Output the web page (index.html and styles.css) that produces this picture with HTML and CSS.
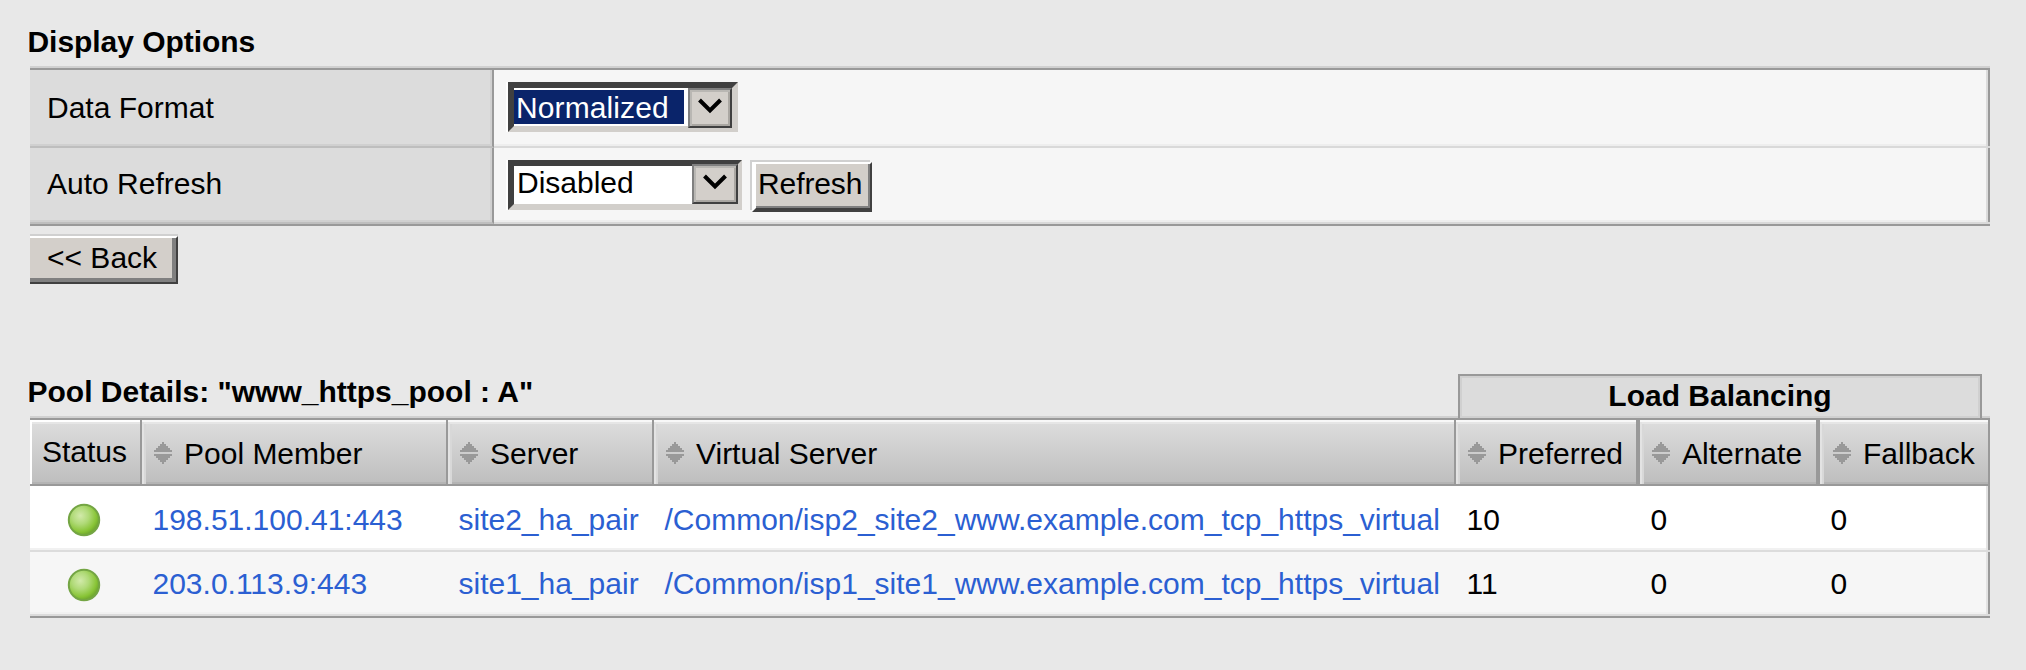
FILE: index.html
```html
<!DOCTYPE html>
<html lang="en">
<head>
<meta charset="utf-8">
<title>Pool Details</title>
<link rel="stylesheet" href="styles.css">
</head>
<body>
<svg class="defs" width="0" height="0" aria-hidden="true">
  <defs>
    <radialGradient id="led" cx="0.38" cy="0.36" r="0.62">
      <stop offset="0" stop-color="#d2eaaa"/>
      <stop offset="0.45" stop-color="#b0da78"/>
      <stop offset="0.85" stop-color="#88c436"/>
      <stop offset="1" stop-color="#74ac30"/>
    </radialGradient>
    <symbol id="sort" viewBox="0 0 18 22">
      <path d="M8 0h2v2h2v2h2v2h2v2h2v2H0V8h2V6h2V4h2V2h2z" fill="#999"/>
      <path d="M0 12h18v2h-2v2h-2v2h-2v2h-2v2H8v-2H6v-2H4v-2H2v-2H0z" fill="#999"/>
    </symbol>
    <symbol id="green" viewBox="0 0 34 34">
      <circle cx="17" cy="17" r="15.2" fill="url(#led)" stroke="#74a544" stroke-width="2"/>
    </symbol>
    <symbol id="arrow" viewBox="0 0 24 16">
      <path d="M1.5 2l10.5 10.5L22.500 2" fill="none" stroke="#000" stroke-width="4"/>
    </symbol>
  </defs>
</svg>

<main class="page">
  <h2 class="title">Display Options</h2>
  <section class="options">
    <div class="option">
      <div class="label">Data Format</div>
      <div class="control">
        <div class="select focused">
          <span class="value">Normalized</span>
          <span class="drop"><svg width="24" height="16"><use href="#arrow"/></svg></span>
        </div>
      </div>
    </div>
    <div class="option">
      <div class="label">Auto Refresh</div>
      <div class="control">
        <div class="select wide">
          <span class="value">Disabled</span>
          <span class="drop"><svg width="24" height="16"><use href="#arrow"/></svg></span>
        </div>
        <button class="refresh">Refresh</button>
      </div>
    </div>
  </section>
  <button class="back">&lt;&lt; Back</button>

  <div class="pool-head">
    <h2 class="title pool-title">Pool Details: "www_https_pool : A"</h2>
    <div class="group">Load Balancing</div>
  </div>
  <section class="pool">
    <div class="row head">
      <div class="cell status">Status</div>
      <div class="cell"><svg class="sort" width="18" height="22"><use href="#sort"/></svg>Pool Member</div>
      <div class="cell"><svg class="sort" width="18" height="22"><use href="#sort"/></svg>Server</div>
      <div class="cell"><svg class="sort" width="18" height="22"><use href="#sort"/></svg>Virtual Server</div>
      <div class="cell lb"><svg class="sort" width="18" height="22"><use href="#sort"/></svg>Preferred</div>
      <div class="cell lb"><svg class="sort" width="18" height="22"><use href="#sort"/></svg>Alternate</div>
      <div class="cell last"><svg class="sort" width="18" height="22"><use href="#sort"/></svg>Fallback</div>
    </div>
    <div class="row">
      <div class="data led"><svg width="34" height="34"><use href="#green"/></svg></div>
      <div class="data"><a>198.51.100.41:443</a></div>
      <div class="data"><a>site2_ha_pair</a></div>
      <div class="data"><a>/Common/isp2_site2_www.example.com_tcp_https_virtual</a></div>
      <div class="data">10</div>
      <div class="data">0</div>
      <div class="data">0</div>
    </div>
    <div class="row alt">
      <div class="data led"><svg width="34" height="34"><use href="#green"/></svg></div>
      <div class="data"><a>203.0.113.9:443</a></div>
      <div class="data"><a>site1_ha_pair</a></div>
      <div class="data"><a>/Common/isp1_site1_www.example.com_tcp_https_virtual</a></div>
      <div class="data">11</div>
      <div class="data">0</div>
      <div class="data">0</div>
    </div>
  </section>
</main>
</body>
</html>
```
FILE: styles.css
```css
* { box-sizing: border-box; }

body {
  margin: 0;
  background: #e8e8e8;
  color: #000;
  font: 30px/34px "Liberation Sans", Arial, sans-serif;
}

.defs { position: absolute; }

.page {
  width: 1990px;
  padding: 25px 0 0 30px;
}

.title {
  margin: 0 0 0 -1px;
  overflow: hidden;
  text-indent: -1.5px;
  font-size: 30px;
  line-height: 34px;
  font-weight: bold;
  letter-spacing: -0.05px;
}

/* Display options */
.options {
  margin-top: 7px;
  border-top: 2px solid #d0d0d0;
  border-bottom: 2px solid #999;
}

.option {
  display: grid;
  grid-template-columns: 464px 1fr;
  height: 78px;
  border-bottom: 2px solid #d9d9d9;
}

.option:first-child { border-top: 2px solid #999; height: 80px; }
.option:last-child { height: 76px; }

.label {
  margin-bottom: -2px;
  padding: 21px 0 0 17px;
  background: #dcdcdc;
  border-right: 2px solid #999;
  border-bottom: 2px solid #bebebe;
  box-shadow: inset -2px -2px #d0d0d0;
}

.option:last-child .label { padding-top: 19px; }

.control {
  display: flex;
  align-items: flex-start;
  gap: 8px;
  padding: 12px 0 0 14px;
  background: #f6f6f6;
  border-right: 2px solid #999;
  box-shadow: inset -2px 0 #dcdcdc, inset 0 -2px #eee;
}

.select {
  display: flex;
  justify-content: space-between;
  width: 230px;
  height: 50px;
  border: 6px solid;
  border-color: #404040 #d2cfcb #d2cfcb #404040;
  background: #fff;
  box-shadow: -2px 0 #fff;
}

.wide { width: 234px; }

.value { padding: 0 0 0 3px; height: 34px; }

.focused .value {
  width: 170px;
  height: 34px;
  margin-top: 2px;
  padding-left: 2px;
  line-height: 36px;
  letter-spacing: 0.1px;
  background: #0a246a;
  color: #fff;
}

.drop {
  display: flex;
  justify-content: center;
  align-items: center;
  width: 44px;
  height: 40px;
  padding-bottom: 5px;
  background: #d3cfca;
  border: 2px solid;
  border-color: #808080 #404040 #404040 #808080;
  box-shadow: inset 2px 2px #b9b7b3, inset -2px -2px #aaa7a2;
}

.wide .drop { width: 46px; margin: -2px -2px 0 0; }

button {
  display: block;
  padding: 0;
  font: inherit;
  color: #000;
  text-align: left;
  background: #d3cfca;
  border-style: solid;
}

.refresh {
  width: 120px;
  height: 50px;
  margin: 2px 0 0 2px;
  padding: 3px 0 7px 2px;
  border-width: 2px 2px 4px 4px;
  border-color: #fff #404040 #404040 #fff;
  box-shadow: -2px -2px #d0d0d0, inset -2px -2px #808080;
  line-height: 34px;
  letter-spacing: -0.1px;
  white-space: nowrap;
}

.back {
  width: 148px;
  height: 48px;
  margin-top: 10px;
  padding: 3px 0 7px 17px;
  border-width: 2px 2px 2px 0;
  border-color: #fff #404040 #404040 #fff;
  box-shadow: 0 -2px #d0d0d0, inset -4px -4px #808080;
}

/* Pool details */
.pool-head {
  display: flex;
  justify-content: space-between;
  align-items: flex-start;
  margin-top: 90px;
  padding-right: 8px;
  height: 42px;
}

.pool-title { margin-top: 1px; letter-spacing: 0; }

.group {
  position: relative;
  width: 524px;
  height: 44px;
  padding-top: 3px;
  text-align: center;
  font-weight: bold;
  background: #dcdcdc;
  border: 2px solid #999;
  border-bottom: 0;
  box-shadow: inset 0 0 0 2px #d0d0d0;
}

.pool {
  border-top: 2px solid #d0d0d0;
  border-bottom: 2px solid #999;
}

.row {
  display: grid;
  grid-template-columns: 112px 306px 206px 802px 184px 180px 170px;
  height: 66px;
  background: #fff;
  border-bottom: 2px solid #dcdcdc;
}

.alt { height: 64px; background: #f6f6f6; }

.row:not(.head) { box-shadow: inset -2px 0 #999, inset -4px 0 #e3e3e3, inset 0 -2px #f1f1f1; }

.head {
  height: 68px;
  background: linear-gradient(#dedede, #bebebe);
  border-top: 2px solid #999;
  border-bottom: 2px solid #999;
}

.cell {
  display: flex;
  gap: 12px;
  padding: 17px 0 0 12px;
  border-right: 2px solid #999;
  box-shadow: inset 0 2px #f8f8f8, inset 2px 0 #e3e3e3, inset 0 4px #e6e6e6, inset 4px 0 #d8d8d8, inset 0 -2px #b4b4b4;
  white-space: nowrap;
}

.status {
  padding-top: 15px;
  padding-left: 12px;
  box-shadow: inset 2px 2px #fff, inset 0 4px #e6e6e6, inset 0 -2px #b4b4b4;
}

.lb { border-right-width: 4px; }
.last { padding-left: 13px; }
.sort { flex: none; margin-top: 5px; }

.data {
  padding: 17px 0 0 10.5px;
  white-space: nowrap;
}

.alt .data { padding-top: 15px; }
.row .led { padding: 17px 0 0 37px; line-height: 0; }
.alt .led { padding-top: 16px; }

a { color: #2b5fd2; }
```
